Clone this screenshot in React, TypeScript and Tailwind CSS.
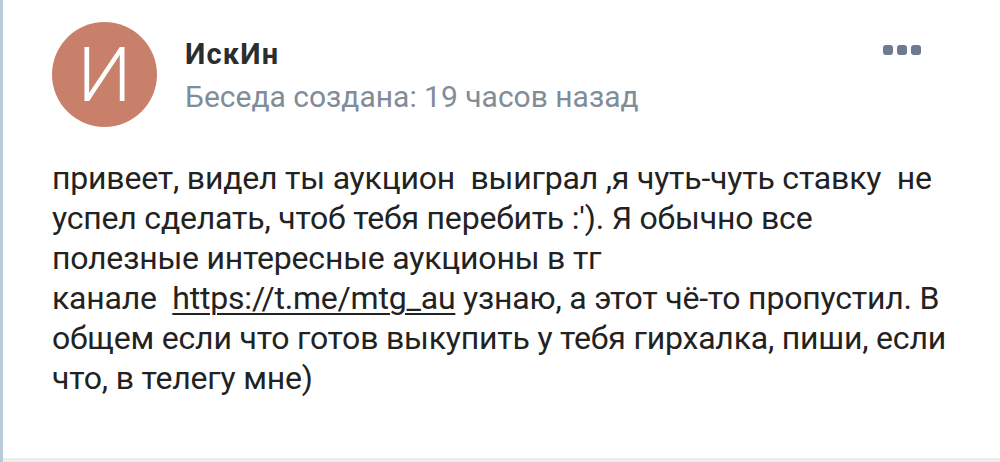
export default function App() {
  return (
    <div className="w-[1000px] h-[462px] bg-white flex flex-col overflow-hidden font-['Roboto',sans-serif] border-l-[3px] border-[#b7cbd9]">
      <div className="flex-1 flex flex-col pl-[49px] pr-[30px]">
        <div className="flex items-start pt-[22px]">
          <div className="w-[105px] h-[105px] rounded-full bg-[#c8806a] flex items-center justify-center shrink-0">
            <span className="text-white text-[76px] font-light leading-none">И</span>
          </div>
          <div className="flex flex-col ml-[28px] pt-[16px] flex-1">
            <span className="text-[29px] font-bold text-[#2c2d2e] leading-[32px] tracking-[1.2px]">ИскИн</span>
            <span className="text-[30px] text-[#818c99] leading-[34px] mt-[10px]">Беседа создана: 19 часов назад</span>
          </div>
          <div className="flex gap-[4px] mt-[23px] mr-[49px]">
            <span className="w-[10px] h-[10px] rounded-[3px] bg-[#6d7a8f]" />
            <span className="w-[10px] h-[10px] rounded-[3px] bg-[#6d7a8f]" />
            <span className="w-[10px] h-[10px] rounded-[3px] bg-[#6d7a8f]" />
          </div>
        </div>
        <p className="mt-[31px] text-[32px] tracking-[-0.2px] leading-[40px] text-[#222222] whitespace-pre-wrap">
          {'привеет, видел ты аукцион  выиграл ,я чуть-чуть ставку  не\nуспел сделать, чтоб тебя перебить :\'). Я обычно все\nполезные интересные аукционы в тг\nканале  '}
          <span className="underline underline-offset-[4px] decoration-[2px]">https://t.me/mtg_au</span>
          {' узнаю, а этот чё-то пропустил. В\nобщем если что готов выкупить у тебя гирхалка, пиши, если\nчто, в телегу мне)'}
        </p>
      </div>
      <div className="h-[4px] bg-[#ebedf0]" />
    </div>
  );
}
